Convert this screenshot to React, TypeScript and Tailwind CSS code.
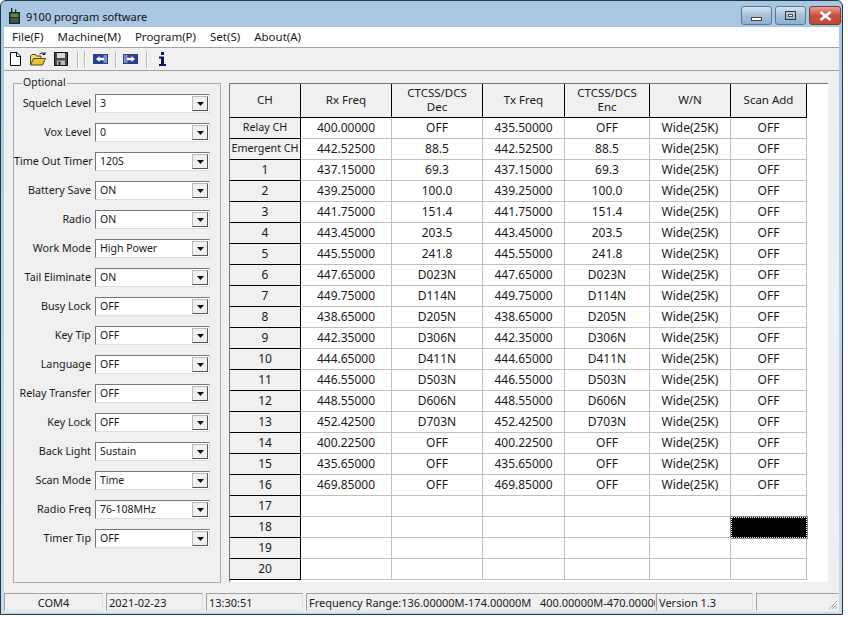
const settings = [
  ['Squelch Level', '3'],
  ['Vox Level', '0'],
  ['Time Out Timer', '120S'],
  ['Battery Save', 'ON'],
  ['Radio', 'ON'],
  ['Work Mode', 'High Power'],
  ['Tail Eliminate', 'ON'],
  ['Busy Lock', 'OFF'],
  ['Key Tip', 'OFF'],
  ['Language', 'OFF'],
  ['Relay Transfer', 'OFF'],
  ['Key Lock', 'OFF'],
  ['Back Light', 'Sustain'],
  ['Scan Mode', 'Time'],
  ['Radio Freq', '76-108MHz'],
  ['Timer Tip', 'OFF'],
];

const headers = ['CH', 'Rx Freq', 'CTCSS/DCS Dec', 'Tx Freq', 'CTCSS/DCS Enc', 'W/N', 'Scan Add'];

const channels = [
  ['Relay CH', '400.00000', 'OFF', '435.50000', 'OFF'],
  ['Emergent CH', '442.52500', '88.5', '442.52500', '88.5'],
  ['1', '437.15000', '69.3', '437.15000', '69.3'],
  ['2', '439.25000', '100.0', '439.25000', '100.0'],
  ['3', '441.75000', '151.4', '441.75000', '151.4'],
  ['4', '443.45000', '203.5', '443.45000', '203.5'],
  ['5', '445.55000', '241.8', '445.55000', '241.8'],
  ['6', '447.65000', 'D023N', '447.65000', 'D023N'],
  ['7', '449.75000', 'D114N', '449.75000', 'D114N'],
  ['8', '438.65000', 'D205N', '438.65000', 'D205N'],
  ['9', '442.35000', 'D306N', '442.35000', 'D306N'],
  ['10', '444.65000', 'D411N', '444.65000', 'D411N'],
  ['11', '446.55000', 'D503N', '446.55000', 'D503N'],
  ['12', '448.55000', 'D606N', '448.55000', 'D606N'],
  ['13', '452.42500', 'D703N', '452.42500', 'D703N'],
  ['14', '400.22500', 'OFF', '400.22500', 'OFF'],
  ['15', '435.65000', 'OFF', '435.65000', 'OFF'],
  ['16', '469.85000', 'OFF', '469.85000', 'OFF'],
  ['17'],
  ['18'],
  ['19'],
  ['20'],
];

const Combo = ({ value }: { value: string }) => (
  <div className="flex h-[19px] w-[115px] items-center border border-t-[#777] border-l-[#777] border-r-[#ddd] border-b-[#ddd] bg-white pl-[4px] pr-px">
    <span className="flex-1 text-[10.5px] leading-none">{value}</span>
    <div className="flex h-[15px] w-[16px] items-center justify-center border border-[#bbb] border-r-[#555] border-b-[#555] bg-[#f0f0f0]">
      <svg width="7" height="4" viewBox="0 0 7 4"><path d="M0 0h7L3.5 4z" fill="#111" /></svg>
    </div>
  </div>
);

const Sep = ({ className }: { className: string }) => (
  <div className={`h-[17px] w-[2px] border-l border-r border-l-[#bbb] border-r-white ${className}`} />
);

const ToolbarIcons = () => (
  <div className="flex h-[23px] items-center border-b border-[#a0a0a0] bg-[#f0f0f0] pl-[6px]">
    {/* new */}
    <svg width="11" height="14" viewBox="0 0 11 14">
      <path d="M.5.500h6.500l3.500 3.500v9.500H.5z" fill="#fff" stroke="#111" />
      <path d="M6.500.500V4.500H10.500" fill="none" stroke="#111" />
    </svg>
    {/* open */}
    <svg className="ml-[9px]" width="16" height="14" viewBox="0 0 16 14">
      <path d="M.5 13V4L2 2.500h3.500l1 1.500h4.500v2.500" fill="#f5d76e" stroke="#554a10" />
      <path d="M.5 13l3-6.500h12L12.500 13z" fill="#e8c040" stroke="#554a10" />
      <path d="M9.500 2q2.500-2 5-.5M15 0v2.500h-2.500" fill="none" stroke="#111" />
    </svg>
    {/* save */}
    <svg className="ml-[8px]" width="14" height="14" viewBox="0 0 14 14">
      <path d="M.5.500h13v13H.5z" fill="#4a4a4a" stroke="#111" />
      <path d="M3 1h8v5H3z" fill="#d8d8d8" />
      <path d="M3 8.500h8V13H3z" fill="#bbb" />
      <path d="M4.500 9.500h2V13h-2z" fill="#222" />
    </svg>
    <Sep className="ml-[9px]" />
    <Sep className="ml-[5px]" />
    {/* send left */}
    <svg className="ml-[7px]" width="15" height="10" viewBox="0 0 15 10">
      <path d="M0 0h15v10H0z" fill="#2a3f8f" />
      <path d="M10.500 1h3.500v8h-3.500z" fill="#7f8fc8" />
      <path d="M3 5l3.500-3v1.800h4.500v2.400H6.500V8z" fill="#fff" />
    </svg>
    <Sep className="ml-[7px]" />
    {/* send right */}
    <svg className="ml-[6px]" width="15" height="10" viewBox="0 0 15 10">
      <path d="M0 0h15v10H0z" fill="#2a3f8f" />
      <path d="M1 1h3.500v8H1z" fill="#7f8fc8" />
      <path d="M12 5L8.500 2v1.800H4v2.400h4.500V8z" fill="#fff" />
    </svg>
    <Sep className="ml-[8px]" />
    {/* info */}
    <svg className="ml-[11px]" width="7" height="14" viewBox="0 0 7 14">
      <path d="M2 0h3v3H2zM0 4.500h5v7.500h2v2H0v-2h2V6.500H0z" fill="#10106e" />
    </svg>
  </div>
);

const panel = 'flex h-[18px] items-center border border-t-[#a0a0a0] border-l-[#a0a0a0] border-r-[#e0e0e0] border-b-[#e0e0e0]';

const App = () => (
  <div
    className="h-[617px] w-[848px] overflow-hidden bg-white text-[#1a1a1a]"
    style={{ fontFamily: '"Noto Sans", "Liberation Sans", sans-serif' }}
  >
    {/* Window */}
    <div className="flex h-[615px] w-[843px] flex-col rounded-t-[6px] border border-[#1e3a4a] bg-gradient-to-b from-[#a9c6e2] to-[#c9dcee] px-[3px] pb-[2px]">
      {/* Title bar */}
      <div className="flex h-[26px] shrink-0 items-center pl-[5px]">
        <svg className="mt-[3px]" width="11" height="16" viewBox="0 0 11 16">
          <path d="M2 0h1.300v4H2zM6 1.500h1.300V4H6z" fill="#222" />
          <path d="M0 4h11v12H0z" fill="#1d2a22" />
          <path d="M1.500 5.500h8v3.500h-8z" fill="#5a8a4a" />
          <path d="M1.500 10h8v4.500h-8z" fill="#4a5a3a" />
        </svg>
        <span className="ml-[6px] mt-[4px] flex-1 text-[11px] leading-none text-[#111]">9100 program software</span>
        <div className="-mr-[2px] flex items-start gap-[3px] self-start pt-[5px]">
          <div className="flex h-[19px] w-[31px] items-end justify-center rounded-[3px] border border-[#5a7a9a] bg-gradient-to-b from-[#d5e3f0] via-[#a9c0d8] to-[#8fb0d0] pb-[3px]">
            <div className="h-[4px] w-[11px] border border-[#444] bg-white" />
          </div>
          <div className="flex h-[19px] w-[31px] items-center justify-center rounded-[3px] border border-[#5a7a9a] bg-gradient-to-b from-[#d5e3f0] via-[#a9c0d8] to-[#8fb0d0]">
            <div className="flex h-[9px] w-[11px] items-center justify-center border border-[#333]">
              <div className="h-[3px] w-[5px] border border-[#555] bg-white" />
            </div>
          </div>
          <div className="flex h-[19px] w-[32px] items-center justify-center rounded-[3px] border border-[#7a3a30] bg-gradient-to-b from-[#e8a090] via-[#c8503c] to-[#c04838]">
            <svg width="13" height="10" viewBox="0 0 13 10">
              <path d="M1.500 1l10 8M11.500 1l-10 8" stroke="#fff" strokeWidth="2.600" />
            </svg>
          </div>
        </div>
      </div>

      {/* Menu */}
      <div className="flex h-[20px] shrink-0 items-center gap-[14px] bg-white pl-[8px] text-[11.500px] leading-none">
        <span>File(F)</span>
        <span>Machine(M)</span>
        <span>Program(P)</span>
        <span>Set(S)</span>
        <span>About(A)</span>
      </div>

      <div className="shrink-0 border-t border-[#a0a0a0]">
        <ToolbarIcons />
      </div>

      {/* Main area */}
      <div className="flex flex-1 gap-[8px] overflow-hidden bg-[#f0f0f0] pl-[9px] pr-[11px] pt-[12px]">
        {/* Optional group */}
        <div className="relative h-[500px] w-[208px] shrink-0 border border-[#aaa] pt-[10px]">
          <span className="absolute -top-[7px] left-[8px] bg-[#f0f0f0] px-px text-[10.500px] leading-none">Optional</span>
          <div className="flex flex-col gap-[10px]">
            {settings.map(([label, value]) => (
              <div key={label} className="flex items-center">
                <span className="w-[81px] whitespace-nowrap pr-[4px] text-right text-[10.750px] leading-none">{label}</span>
                <Combo value={value} />
              </div>
            ))}
          </div>
        </div>

        {/* Channel grid */}
        <div className="h-[499px] flex-1 border-t border-l border-t-[#777] border-l-[#777] bg-white">
          <div className="grid w-[577px] grid-cols-[71px_91px_91px_82px_85px_81px_76px] grid-rows-[34px_repeat(22,21px)]">
            {headers.map((h) => (
              <div
                key={h}
                className="flex items-center justify-center border-r border-b border-black bg-[#f0f0f0] px-[8px] pb-px text-center text-[11.500px] leading-[14px]"
              >
                {h}
              </div>
            ))}
            {channels.map((row, r) => (
              <div key={row[0]} className="contents">
                <div className={`flex items-center justify-center whitespace-nowrap border-r border-b border-black bg-[#f0f0f0] pb-px leading-none ${r < 2 ? 'text-[10.750px]' : 'text-[12px]'}`}>
                  {row[0]}
                </div>
                {[1, 2, 3, 4].map((c) => (
                  <div
                    key={c}
                    className="flex items-center justify-center border-r border-b border-[#c0c0c0] pb-px text-[12px] leading-none"
                  >
                    {row[c] ?? ''}
                  </div>
                ))}
                <div className="flex items-center justify-center border-r border-b border-[#c0c0c0] pb-px text-[12px] leading-none">
                  {r < 18 ? 'Wide(25K)' : ''}
                </div>
                {row[0] === '18' ? (
                  <div className="border border-dotted border-white bg-black outline outline-1 outline-[#888]" />
                ) : (
                  <div className="flex items-center justify-center border-r border-b border-[#c0c0c0] pb-px text-[12px] leading-none">
                    {r < 18 ? 'OFF' : ''}
                  </div>
                )}
              </div>
            ))}
          </div>
        </div>
      </div>

      {/* Status bar */}
      <div className="flex h-[24px] shrink-0 items-end bg-[#f0f0f0] pb-px text-[11px] leading-none">
        <div className={`${panel} w-[99px] justify-center`}>COM4</div>
        <div className={`${panel} ml-[3px] w-[97px] pl-[2px]`}>2021-02-23</div>
        <div className={`${panel} ml-[3px] w-[97px] pl-[2px]`}>13:30:51</div>
        <div className={`${panel} ml-[3px] w-[350px] overflow-hidden whitespace-pre pl-[2px]`}>
          Frequency Range:136.00000M-174.00000M{'   '}400.00000M-470.00000M
        </div>
        <div className={`${panel} w-[97px] pl-[2px]`}>Version 1.3</div>
        <div className="relative ml-[3px] h-[18px] flex-1 border border-t-[#a0a0a0] border-l-[#a0a0a0] border-r-transparent border-b-transparent">
          <svg className="absolute bottom-0 right-0" width="11" height="11" viewBox="0 0 11 11">
            <path d="M10 2L2 10M10 5l-5 5M10 8l-2 2" stroke="#aaa" />
          </svg>
        </div>
      </div>
    </div>
  </div>
);

export default App;
